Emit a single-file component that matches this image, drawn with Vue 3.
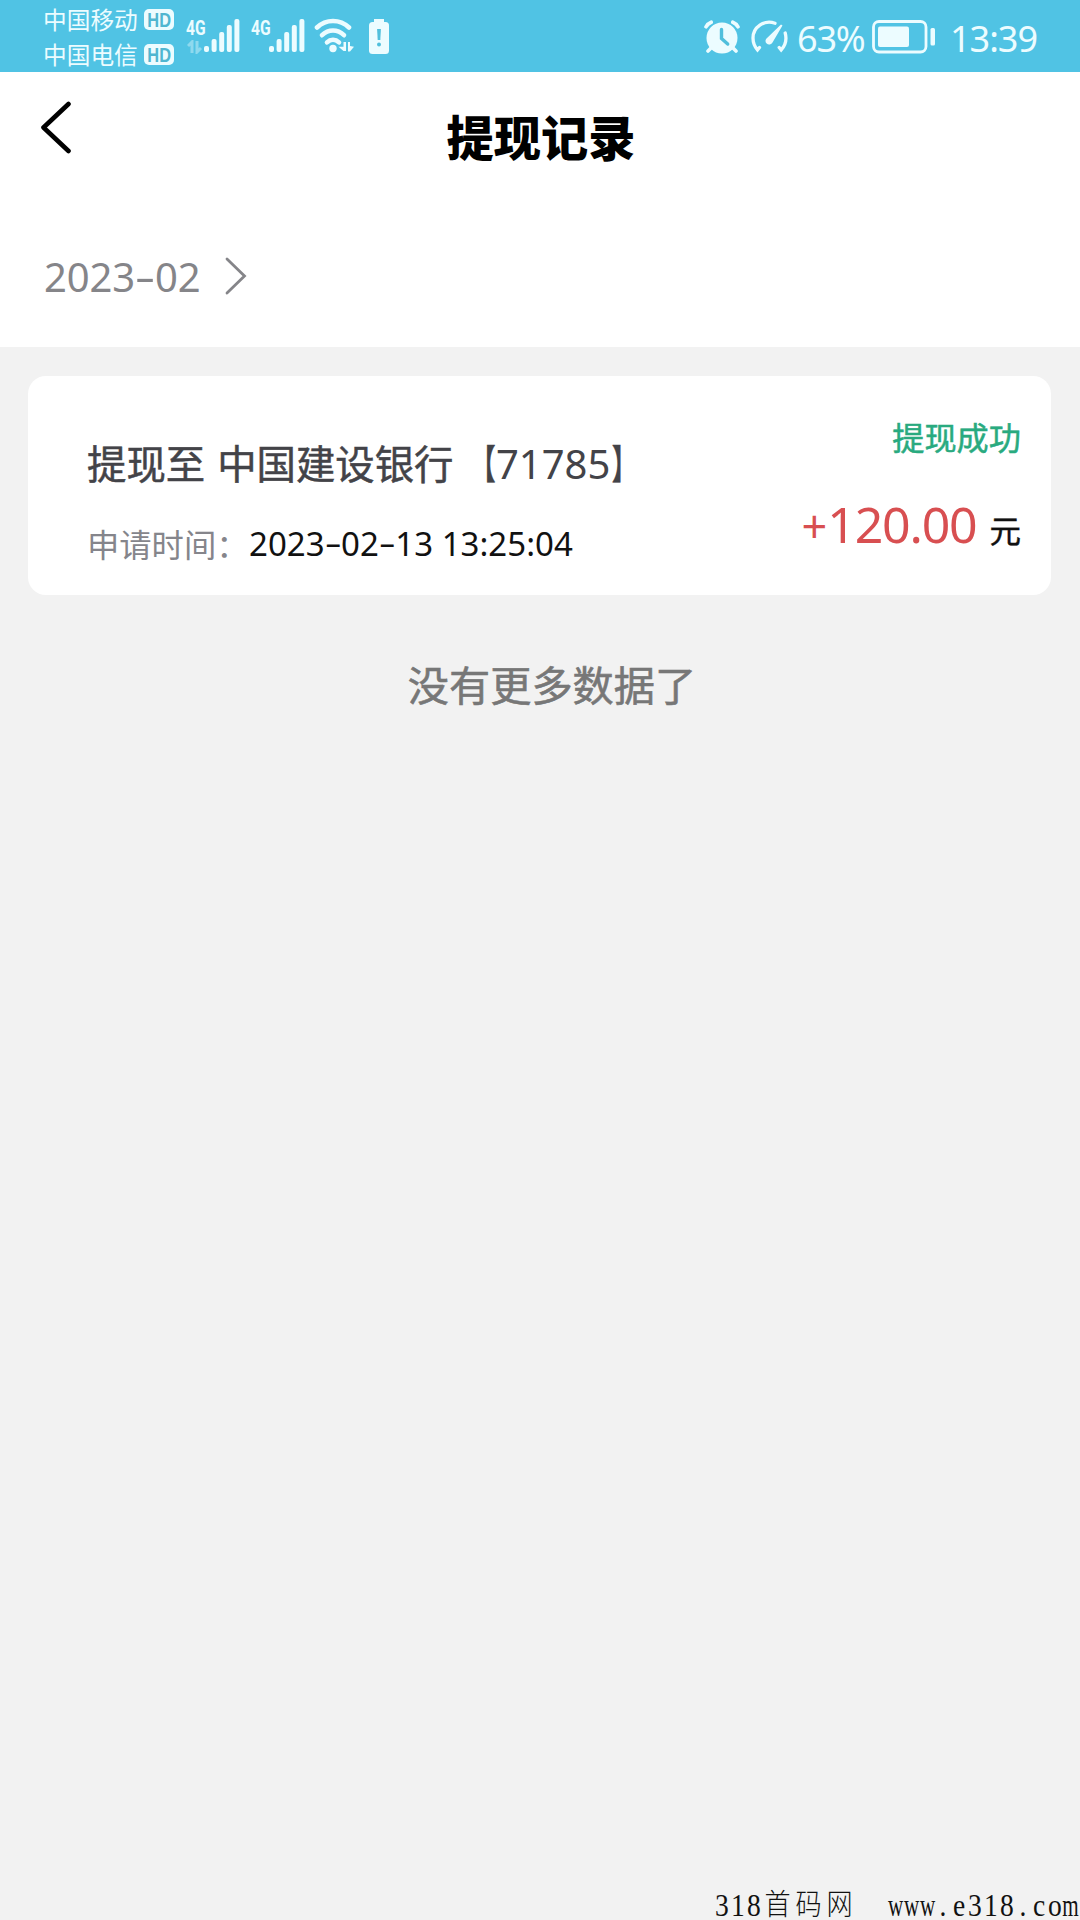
<script setup>
const bars = [
  { x: 0, h: 6 },
  { x: 7.6, h: 13 },
  { x: 15.2, h: 20 },
  { x: 22.8, h: 27 },
  { x: 30.4, h: 33 },
]
const record = {
  bank: ['提现至', '中国建设银行'],
  tail: '71785',
  time: '2023-02-13 13:25:04',
  status: '提现成功',
  amount: '120.00',
}
const month = '2023-02'
const site = ['318首码网', 'www.e318.com']
const kind = (c) => (/[wm]/.test(c) ? 'wide' : /[^\x00-\x7f]/.test(c) ? 'han' : '')
</script>

<template>
  <div class="page">
    <header class="status">
      <div class="carriers">
        <div v-for="c in ['中国移动', '中国电信']" :key="c" class="carrier">
          <span>{{ c }}</span><b class="hd"><span>HD</span></b>
        </div>
      </div>
      <div v-for="n in 2" :key="n" class="signal">
        <div class="net">
          <span>4G</span>
          <svg v-if="n === 1" class="faint" width="16" height="14" viewBox="0 0 16 14"><path d="M5 13V2L1 6M10 1v11l4-4" /></svg>
        </div>
        <svg width="36" height="34" viewBox="0 0 36 34">
          <rect v-for="b in bars" :key="b.x" :x="b.x" :y="34 - b.h" width="5" :height="b.h" rx="2" />
        </svg>
      </div>
      <svg class="wifi" width="41" height="36" viewBox="0 0 41 36">
        <g fill="none" stroke="#ecfcff" stroke-width="4.6" stroke-linecap="round">
          <path d="M3 9.5C12 .8 26 .8 35 9.5" />
          <path d="M8 17.2C14.500 11 23.500 11 30 17.200" />
          <path d="M13 24.300C16.500 21 21.500 21 25 24.300" />
        </g>
        <circle cx="19" cy="30.500" r="3.700" />
        <path d="M32 24v9h-2.500l-5-4.200h5V24zM34 24h2v4l4 .8-4 4.700h-2z" />
      </svg>
      <svg class="alert" width="20" height="35" viewBox="0 0 20 35">
        <path d="M5 0h10v3H5z" />
        <rect y="3" width="20" height="32" rx="3.500" />
        <path d="M8.100 10h3.800l-.6 11H8.700z" fill="#50bfdc" />
        <circle cx="10" cy="25.500" r="2" fill="#50bfdc" />
      </svg>
      <div class="right">
        <svg width="36" height="34" viewBox="0 0 36 34">
          <circle cx="18" cy="18" r="15.500" />
          <path d="M2 6.800Q4 3.400 7.200 2.200M28.800 2.200Q32 3.400 34 6.800" fill="none" stroke="#50c3e4" stroke-width="6" />
          <path d="M2 6.800Q4 3.400 7.200 2.200M28.800 2.200Q32 3.400 34 6.800M7.500 27.500l-3.500 3.500M28.500 27.500l3.500 3.500" fill="none" stroke="#ecfcff" stroke-width="3.600" stroke-linecap="round" />
          <path d="M17.500 9.500v9l6.200 5.500" fill="none" stroke="#50bfdc" stroke-width="3.400" stroke-linecap="round" />
        </svg>
        <svg class="gauge" width="37" height="34" viewBox="0 0 37 34">
          <g fill="none" stroke="#ecfcff" stroke-width="3.300" stroke-linecap="round">
            <path d="M24 3.200C13 -.5 2 7 2 18c0 5 2 9 4.500 12l2-2.500M34.200 13c1.800 6.500 0 12.500-4 17l-2-2.500" />
          </g>
          <path d="M31.500 5.500L21.500 22.500a3.700 3.700 0 1 1-5.200-4.800L30 4.500z" />
        </svg>
        <span class="pct">63%</span>
        <svg class="batt" width="64" height="34" viewBox="0 0 64 34">
          <rect x="1.500" y="1.500" width="52.500" height="30.500" rx="5.500" fill="none" stroke="#ecfcff" stroke-width="2.800" />
          <rect x="6" y="6.500" width="31" height="20.500" rx="2" />
          <rect x="58.500" y="8" width="4.500" height="17.500" rx="1.500" />
        </svg>
        <span class="clock">13:39</span>
      </div>
    </header>

    <nav class="nav">
      <svg class="back" width="32" height="54" viewBox="0 0 32 54"><path d="M28.500 3L3.500 26.500 28.500 50" /></svg>
      <h1>提现记录</h1>
      <i class="pad"></i>
    </nav>
    <div class="month">
      <span><template v-for="(c, i) in month" :key="i"><i v-if="c === '-'" class="dash">-</i><template v-else>{{ c }}</template></template></span>
      <svg width="22" height="38" viewBox="0 0 22 38"><path d="M2 2l17.500 17L2 36" /></svg>
    </div>

    <main>
      <section class="card">
        <div class="info">
          <div class="bank">
            <span class="to">{{ record.bank[0] }}</span><span>{{ record.bank[1] }}</span>
            <span class="bracket open">【</span><span class="tail">{{ record.tail }}</span><span class="bracket close">】</span>
          </div>
          <div class="time">
            <label>申请时间：</label>
            <span><template v-for="(c, i) in record.time" :key="i"><i v-if="c === '-'" class="dash">-</i><template v-else>{{ c }}</template></template></span>
          </div>
        </div>
        <div class="result">
          <div class="ok">{{ record.status }}</div>
          <div class="sum"><span class="plus">+</span><span class="amount">{{ record.amount }}</span><span class="unit">元</span></div>
        </div>
      </section>
      <p class="end">没有更多数据了</p>
    </main>

    <footer>
      <span v-for="s in site" :key="s" class="word"><i v-for="(c, i) in s" :key="i" :class="['cell', kind(c)]"><b>{{ c }}</b></i></span>
    </footer>
  </div>
</template>

<style>
body { margin: 0; }
</style>

<style scoped>
.page {
  width: 1080px;
  height: 1920px;
  display: flex;
  flex-direction: column;
  overflow: hidden;
  background: #f2f2f2;
  font-family: "Noto Sans", "Noto Sans CJK SC", sans-serif;
}
svg { display: block; flex: none; }
i { font-style: normal; }
span { white-space: pre; }
.status {
  height: 72px;
  flex: none;
  box-sizing: border-box;
  padding-left: 43px;
  display: flex;
  align-items: flex-start;
  background: #50c3e4;
  color: #ecfcff;
}
.status svg { fill: #ecfcff; }
.carriers { width: 143px; padding-top: 2px; }
.carrier {
  height: 35px;
  display: flex;
  align-items: center;
  font-size: 23.7px;
  line-height: 36px;
}
.hd {
  margin-left: 6px;
  width: 30px;
  height: 21px;
  border-radius: 5px;
  background: #ecfcff;
  color: #50b6d0;
  font: bold 21px/22px "Liberation Sans", sans-serif;
  display: flex;
  justify-content: center;
}
.hd span { transform: scaleX(.78); }
.signal { display: flex; width: 65px; padding-top: 18px; }
.net { width: 18px; font: bold 20px/20px Roboto, sans-serif; }
.net span { display: block; width: 24px; transform: scaleX(.78); transform-origin: left; }
.faint { margin: 2px 0 0 1px; opacity: .4; }
.status .faint path { fill: none; stroke: #ecfcff; stroke-width: 3; }
.wifi { margin: 18px 0 0 -2px; }
.alert { margin: 19px 0 0 14px; }
.right { display: flex; padding-top: 20px; margin-left: auto; width: 376px; }
.gauge { margin-left: 11px; }
.pct { font-size: 36px; line-height: 38px; letter-spacing: -1.2px; margin-left: 9px; width: 75px; }
.clock { font-size: 36px; line-height: 38px; letter-spacing: -1px; margin-left: 14px; }

.nav {
  height: 130px;
  flex: none;
  display: flex;
  justify-content: space-between;
  background: #fff;
}
.back { margin: 29px 0 0 40px; }
.back path { fill: none; stroke: #000; stroke-width: 4.6; stroke-linecap: round; stroke-linejoin: round; }
.pad { width: 70px; }
h1 { margin: 31px 0 0; font-size: 47.2px; line-height: 70px; font-weight: 900; color: #000; }
.month {
  height: 145px;
  flex: none;
  box-sizing: border-box;
  padding: 50px 0 0 44px;
  display: flex;
  background: #fff;
  color: #858589;
  font-size: 40px;
  line-height: 50px;
}
.month span { letter-spacing: -.15px; }
.month svg { margin: 5px 0 0 25px; }
.month path { fill: none; stroke: #858589; stroke-width: 2.8; stroke-linecap: round; }
.dash { display: inline-block; width: .5em; text-align: center; transform: translateY(-.03em) scaleX(1.6); }

.card {
  margin: 29px 29px 0 28px;
  height: 219px;
  box-sizing: border-box;
  padding: 0 30px 0 59px;
  border-radius: 18px;
  background: #fff;
  display: flex;
  justify-content: space-between;
}
.bank {
  margin-top: 58px;
  font-size: 39.4px;
  line-height: 60px;
  color: #434348;
  display: flex;
  -webkit-text-stroke: .5px #434348;
}
.to { margin-right: 12px; }
.tail { font-size: 40px; -webkit-text-stroke: 0; }
.bracket { font-weight: 700; }
.open { transform: translateX(-1px) scaleX(.62); transform-origin: right; margin-left: 3px; }
.close { transform: translateX(2px) scaleX(.62); transform-origin: left; }
.time { margin-top: 20px; display: flex; line-height: 60px; }
label { width: 162px; font-size: 32.3px; color: #85858b; white-space: nowrap; }
.time span { font-size: 33px; color: #111; }
.result { text-align: right; }
.ok { margin-top: 38px; font-size: 32.2px; line-height: 48px; color: #29aa7f; -webkit-text-stroke: .5px #29aa7f; }
.sum { margin-top: 27px; display: flex; justify-content: flex-end; align-items: baseline; line-height: 70px; }
.plus { font-size: 45px; color: #d84f51; width: 26px; display: flex; justify-content: center; }
.amount { font-size: 50px; letter-spacing: -1.2px; color: #d84f51; }
.unit { margin-left: 13px; font-size: 31.5px; color: #111; -webkit-text-stroke: .4px #111; }
.end {
  margin: 60px 0 0 24px;
  text-align: center;
  font-size: 41.2px;
  line-height: 61px;
  color: #777;
  -webkit-text-stroke: .6px #777;
}

footer {
  margin-top: auto;
  height: 42px;
  padding-left: 714px;
  display: flex;
  gap: 33px;
  color: #111;
  font: 32px/55px "Liberation Serif", "Noto Sans CJK SC", serif;
}
.word { display: flex; }
.cell { width: 15.9px; display: flex; justify-content: center; flex: none; }
.cell b { font-weight: 400; transform: scaleX(.86); }
.cell.han { width: 31px; }
.cell.han b { font-weight: 300; font-size: 29px; transform: scaleX(.9); }
.cell.wide b { transform: scaleX(.66); }
</style>
